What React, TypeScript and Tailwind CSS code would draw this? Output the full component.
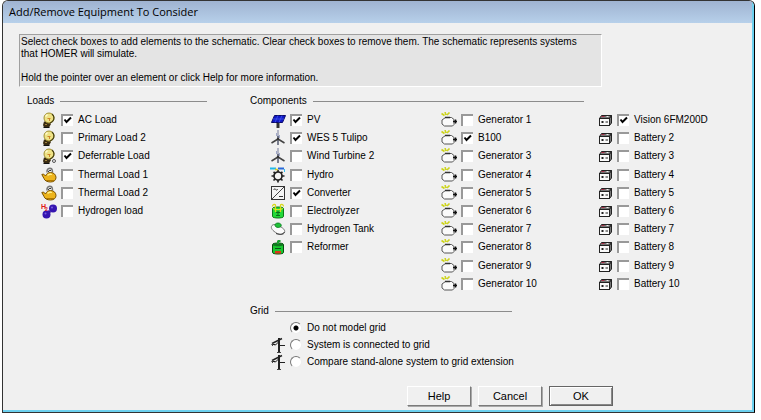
import React, { useState } from 'react';

type IconType = React.FC;

interface Item {
  label: string;
  icon: IconType;
  checked?: boolean;
}

const Svg: React.FC<{ children: React.ReactNode }> = ({ children }) => (
  <svg className="w-4 h-4 shrink-0" viewBox="0 0 16 16" fill="none" aria-hidden="true">
    {children}
  </svg>
);

const BulbShape = () => (
  <>
    <path d="M3 9.500h5l2 2.500-2 3.500H3L2 13z" fill="#3a2c12" />
    <path d="M2.500 15.500h6" stroke="#111" />
    <path d="M4 12.500h2" stroke="#a08440" />
    <circle cx="8" cy="6" r="5" fill="#eee286" stroke="#a09030" />
    <path d="M11 2a5 5 0 0 1 .5 7.500L9 11" stroke="#4a4310" strokeWidth="1.2" />
    <path d="M4.500 4.500l2-2" stroke="#fffbd0" strokeWidth="1.500" />
    <path d="M6.500 6.500h3M8.500 6v3" stroke="#cf8428" />
  </>
);

const BulbIcon = () => <Svg><BulbShape /></Svg>;

const DeferrableIcon = () => (
  <Svg>
    <BulbShape />
    <circle cx="13" cy="13" r="1.5" stroke="#555" />
  </Svg>
);

const KettleIcon = () => (
  <Svg>
    <path d="M6 5.500C5.500 2 8 .8 10 1.500c1.500.5 1.500 2 1.500 4" stroke="#777" strokeWidth="1.500" />
    <path d="M7.500 5c0-1.500 1-2 2.500-1.500" stroke="#222" />
    <path d="M.8 7.500L2.500 7l2 2C5.500 6.500 7.500 5.500 9.500 5.500c3.500 0 5.500 2.500 5.500 5 0 2.500-2 4.500-5.500 4.500S3.500 13.500 3 11.500z" fill="#edb41c" stroke="#7a5200" />
    <path d="M6.500 8.500c1-1 3-1.500 4.500-1" stroke="#fff08a" strokeWidth="1.300" />
    <path d="M5 13.500h8" stroke="#b07800" />
  </Svg>
);

const HydrogenIcon = () => (
  <Svg>
    <path d="M9 8l-2 2" stroke="#3a1a90" strokeWidth="3" />
    <circle cx="12" cy="5.500" r="4" fill="#3515b0" />
    <circle cx="5.500" cy="11.500" r="4" fill="#3515b0" />
    <circle cx="11" cy="4.500" r="1" fill="#7a60e0" />
    <circle cx="4.500" cy="10.500" r="1" fill="#7a60e0" />
    <text x="0" y="6" fontSize="7" fontWeight="700" fill="#e01818" fontFamily="Liberation Sans, sans-serif">H</text>
    <text x="4" y="8" fontSize="5" fontWeight="700" fill="#e01818" fontFamily="Liberation Sans, sans-serif">2</text>
  </Svg>
);

const PvIcon = () => (
  <Svg>
    <path d="M8 9v7" stroke="#333" strokeWidth="3" />
    <path d="M4.500 3.500h11l-3 7h-11z" fill="#1018c8" stroke="#080868" />
    <path d="M8 3.500l-3 7M12 3.500l-3 7M3 7h11" stroke="#4860f0" strokeWidth=".7" />
  </Svg>
);

const TurbineIcon = () => (
  <Svg>
    <path d="M8 0v8" stroke="#777d9c" />
    <path d="M6.500 3v3M9.500 5v3" stroke="#a0a8c8" />
    <path d="M8 6v9" stroke="#555b70" strokeWidth="1.500" />
    <path d="M8 9L1.500 13M8 9l6.500 4" stroke="#444" strokeWidth="1.500" />
    <circle cx="8" cy="9" r="1.200" fill="#333" />
  </Svg>
);

const HydroIcon = () => (
  <Svg>
    <circle cx="8" cy="9" r="4" fill="#f4f4f4" stroke="#222" strokeWidth="1.700" />
    <path d="M8 3v2M8 13v2.500M1.500 9H4M12 9h2.500M3.500 5l1.500 1M12.500 5L11 6M3.500 13.500L5 12M12.500 13.500L11 12" stroke="#222" strokeWidth="1.700" />
    <path d="M0 1.500h6" stroke="#20b8e8" strokeWidth="2" />
    <path d="M5 2.500h3" stroke="#d8c820" strokeWidth="1.500" />
    <path d="M8 1.500h6" stroke="#2868d8" strokeWidth="2" />
    <path d="M14.500 2v3" stroke="#30c0f0" />
  </Svg>
);

const ConverterIcon = () => (
  <Svg>
    <rect x="1.500" y="1.500" width="13" height="13" fill="#f4f4f4" stroke="#333" />
    <path d="M14 2L2 14" stroke="#444" />
    <path d="M3.500 5c.8-1.300 1.500-1.300 2.200-.5s1.400.8 2-.5M9 11.500h4" stroke="#333" />
  </Svg>
);

const ElectrolyzerIcon = () => (
  <Svg>
    <path d="M2.500 5.500c0-2 11-2 11 0v8c0 2-11 2-11 0z" fill="#22d838" stroke="#0a7a18" />
    <path d="M5.500 9V2.500C5.500.8 2.500 1 2.500 3.500M10.500 9V2.500c0-1.700 3-1.500 3 1" stroke="#d8d818" strokeWidth="1.300" />
    <path d="M3 5.500c2 1.500 8 1.500 10 0" stroke="#e4e820" />
    <path d="M6 9.500h4M6 12.500h4M8 8v4" stroke="#087018" />
  </Svg>
);

const HydrogenTankIcon = () => (
  <Svg>
    <path d="M2 4.500C4 2.500 7 4 10 5.500s5.500 3.500 4.500 6-4.500 2.500-8 .5S0 7 2 4.500z" fill="#fafafa" stroke="#777" />
    <path d="M5 3.500c1-2 5-2 6 0s-1 3-3 3-3.500-1.500-3-3z" fill="#20c038" stroke="#087820" strokeWidth=".8" />
    <path d="M6 12.500c3 1.300 7 1.200 8.500-1.500" stroke="#333" />
  </Svg>
);

const ReformerIcon = () => (
  <Svg>
    <path d="M2.500 5.500c0-2 11-2 11 0v8c0 2-11 2-11 0z" fill="#18c830" stroke="#084a10" />
    <path d="M3 6.500c2 1 8 1 10 0V5c-2-1.500-8-1.500-10 0z" fill="#107820" />
    <path d="M8 5V1.500M8 2h2.500" stroke="#18a030" strokeWidth="2" />
    <path d="M5 9.500h6" stroke="#085818" />
    <path d="M5 12h6v2.500H5z" fill="#d83818" />
  </Svg>
);

const GeneratorIcon = () => (
  <Svg>
    <path d="M4.500 5.500h6l2.500 2v5L11.500 14h-8L1 12V8z" fill="#fafafa" stroke="#555" />
    <path d="M4 5.500h5" stroke="#333" strokeWidth="1.500" />
    <path d="M12 9.500h4M14.500 7.500v4" stroke="#111" strokeWidth="1.500" />
    <path d="M.5 1.500l3 2M4 0l1 3M8.500.5L6 3" stroke="#cdd41c" strokeWidth="1.600" />
  </Svg>
);

const BatteryIcon = () => (
  <Svg>
    <path d="M2.500 6.500l2-3h10l-2 3z" fill="#777" stroke="#222" />
    <path d="M12.500 6.500l2-3v7.500l-2 2.500z" fill="#777" stroke="#222" />
    <rect x="2.500" y="6.500" width="10" height="7" fill="#fafafa" stroke="#222" />
    <path d="M4 10h3M5.500 9v2M8.500 10H11" stroke="#222" />
    <path d="M4.500 4.500h3" stroke="#a83048" />
    <path d="M9.500 4.500h2" stroke="#eee" />
  </Svg>
);

const PylonIcon = () => (
  <Svg>
    <path d="M9 1v15" stroke="#222" strokeWidth="2" />
    <path d="M2 6.500L12 1.500" stroke="#222" strokeWidth="1.500" />
    <path d="M1.500 7.500h4M9 8.500h6M5 8.500l4-4" stroke="#222" />
    <path d="M2.500 6v3M7 15.500h4" stroke="#444" />
  </Svg>
);

const loads: Item[] = [
  { label: 'AC Load', icon: BulbIcon, checked: true },
  { label: 'Primary Load 2', icon: BulbIcon },
  { label: 'Deferrable Load', icon: DeferrableIcon, checked: true },
  { label: 'Thermal Load 1', icon: KettleIcon },
  { label: 'Thermal Load 2', icon: KettleIcon },
  { label: 'Hydrogen load', icon: HydrogenIcon },
];

const components: Item[] = [
  { label: 'PV', icon: PvIcon, checked: true },
  { label: 'WES 5 Tulipo', icon: TurbineIcon, checked: true },
  { label: 'Wind Turbine 2', icon: TurbineIcon },
  { label: 'Hydro', icon: HydroIcon },
  { label: 'Converter', icon: ConverterIcon, checked: true },
  { label: 'Electrolyzer', icon: ElectrolyzerIcon },
  { label: 'Hydrogen Tank', icon: HydrogenTankIcon },
  { label: 'Reformer', icon: ReformerIcon },
];

const generators: Item[] = Array.from({ length: 10 }, (_, i) => ({
  label: i === 1 ? 'B100' : `Generator ${i + 1}`,
  icon: GeneratorIcon,
  checked: i === 1,
}));

const batteries: Item[] = Array.from({ length: 10 }, (_, i) => ({
  label: i === 0 ? 'Vision 6FM200D' : `Battery ${i + 1}`,
  icon: BatteryIcon,
  checked: i === 0,
}));

const gridOptions: { label: string; icon?: IconType }[] = [
  { label: 'Do not model grid' },
  { label: 'System is connected to grid', icon: PylonIcon },
  { label: 'Compare stand-alone system to grid extension', icon: PylonIcon },
];

const CheckRow: React.FC<{ item: Item }> = ({ item }) => {
  const [checked, setChecked] = useState(!!item.checked);
  const Icon = item.icon;

  return (
    <label className="flex items-center gap-1 whitespace-nowrap">
      <Icon />
      <span className="relative w-3 h-3 shrink-0">
        <input
          type="checkbox"
          checked={checked}
          onChange={() => setChecked(prev => !prev)}
          className="block w-3 h-3 appearance-none bg-white border-t-2 border-l-2 border-t-[#999] border-l-[#999]"
        />
        {checked && (
          <svg className="absolute inset-0 w-3 h-3 pointer-events-none" viewBox="0 0 12 12" fill="none">
            <path d="M3.500 5.500l2 2.500L10 3.500" stroke="#000" strokeWidth="2" />
          </svg>
        )}
      </span>
      <span className="pl-px">{item.label}</span>
    </label>
  );
};

const CheckList: React.FC<{ items: Item[] }> = ({ items }) => (
  <div className="grid grid-rows-10 h-[182px] content-start">
    {items.map(item => <CheckRow key={item.label} item={item} />)}
  </div>
);

const SectionTitle: React.FC<{ id: string; title: string }> = ({ id, title }) => (
  <div className="flex items-center gap-[6px] h-4">
    <h2 id={id}>{title}</h2>
    <div className="flex-1 h-px bg-[#8c8c8c]" />
  </div>
);

const buttonClass = 'w-16 h-5 bg-[#f0f0f0] border border-t-white border-l-white border-r-[#7a7a7a] border-b-[#7a7a7a] shadow-[1px_1px_0_#a8a8a8]';

export default function App() {
  const [grid, setGrid] = useState(0);

  return (
    <div className="bg-white pl-[2px] pr-[6px] pb-2 font-['Liberation_Sans',Arial,sans-serif] text-[10px] leading-3 text-black">
      <main className="bg-[#f0f0f0] border border-[#333] border-r-black rounded-t-md overflow-hidden">
        <div className="border-r-2 border-b-2 border-[#6cd0ee]">
          <header className="h-[22px] px-[6px] flex items-center bg-linear-to-b from-[#9fb3d1] to-[#b7d0ea] font-['Open_Sans',sans-serif] text-[11px]">
            <h1>Add/Remove Equipment To Consider</h1>
          </header>

          <div className="pt-[11px] pl-4 pr-2 pb-[4px]">
            <div className="max-w-[583px] h-[53px] pl-px pt-px bg-[#e4e4e4] border border-t-[#a0a0a0] border-l-[#a0a0a0] border-r-white border-b-white">
              <p className="pr-3">
                Select check boxes to add elements to the schematic. Clear check boxes to remove them. The schematic represents systems that HOMER will simulate.
              </p>
              <p className="mt-3">Hold the pointer over an element or click Help for more information.</p>
            </div>

            <div className="flex pl-2 mt-[6px]">
              <section aria-labelledby="loads" className="w-[223px] shrink-0">
                <div className="w-[180px]">
                  <SectionTitle id="loads" title="Loads" />
                </div>
                <div className="pl-[14px] mt-[2px]">
                  <CheckList items={loads} />
                </div>
              </section>

              <div className="flex-1 min-w-0">
                <section aria-labelledby="components">
                  <div className="w-[334px]">
                    <SectionTitle id="components" title="Components" />
                  </div>
                  <div className="grid grid-cols-[171px_156px_1fr] pl-5 mt-[2px]">
                    <CheckList items={components} />
                    <CheckList items={generators} />
                    <CheckList items={batteries} />
                  </div>
                </section>

                <section aria-labelledby="grid" className="mt-[10px]">
                  <div className="w-[262px]">
                    <SectionTitle id="grid" title="Grid" />
                  </div>
                  <div className="pl-5">
                    {gridOptions.map((option, i) => (
                      <label key={option.label} className="flex items-center gap-1 h-[17px] whitespace-nowrap">
                        {option.icon ? <option.icon /> : <span className="w-4" />}
                        <input
                          type="radio"
                          name="grid"
                          checked={grid === i}
                          onChange={() => setGrid(i)}
                          className="w-3 h-3 shrink-0 appearance-none rounded-full bg-white border border-t-[#777] border-l-[#777] border-r-[#eee] border-b-[#eee] checked:bg-[radial-gradient(circle,#000_2px,#fff_3px)]"
                        />
                        <span className="pl-px">{option.label}</span>
                      </label>
                    ))}
                  </div>
                </section>
              </div>
            </div>

            <div className="flex gap-[7px] mt-4 pl-[388px] text-[11px]">
              <button type="button" className={buttonClass}>Help</button>
              <button type="button" className={buttonClass}>Cancel</button>
              <button type="button" className="w-16 h-5 bg-[#f0f0f0] border border-[#666] shadow-[inset_1px_1px_0_#fff,inset_-1px_-1px_0_#888]">OK</button>
            </div>
          </div>
        </div>
      </main>
    </div>
  );
}
